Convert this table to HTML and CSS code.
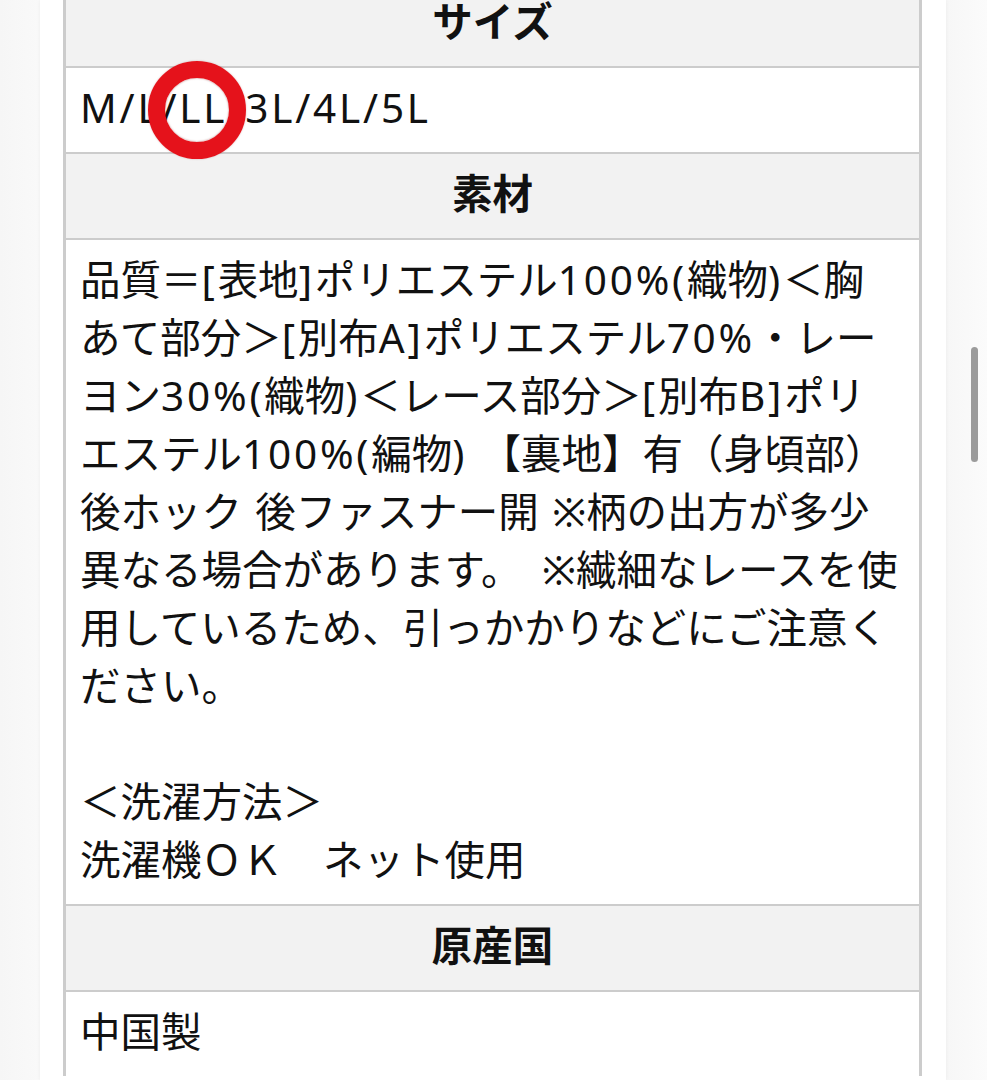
FILE: index.html
```html
<!DOCTYPE html>
<html lang="ja">
<head>
<meta charset="utf-8">
<title>商品仕様</title>
<link rel="stylesheet" href="styles.css">
</head>
<body>
<div class="page">
  <main class="panel">
    <section class="spec">
      <div class="row head">サイズ</div>
      <div class="row cell"><span class="lat">M/L/LL/3L/4L/5L</span></div>
      <div class="row head">素材</div>
      <div class="row cell">品質＝<span class="lat">[</span>表地<span class="lat">]</span>ポリエステル<span class="lat">100%(</span>織物<span class="lat">)</span>＜胸<br>あて部分＞<span class="lat">[</span>別布<span class="lat">A]</span>ポリエステル<span class="lat">70%</span>・レー<br>ヨン<span class="lat">30%(</span>織物<span class="lat">)</span>＜レース部分＞<span class="lat">[</span>別布<span class="lat">B]</span>ポリ<br>エステル<span class="lat">100%(</span>編物<span class="lat">) </span>【裏地】有（身頃部）<br>後ホック<span class="lat"> </span>後ファスナー開<span class="lat"> </span>※柄の出方が多少<br>異なる場合があります。<span class="lat wide"> </span>※繊細なレースを使<br>用しているため、引っかかりなどにご注意く<br>ださい。<br><br>＜洗濯方法＞<br>洗濯機ＯＫ　ネット使用</div>
      <div class="row head">原産国</div>
      <div class="row cell">中国製</div>
    </section>
  </main>
</div>
<div class="mark" aria-hidden="true"></div>
<div class="scroll-indicator" aria-hidden="true"></div>
</body>
</html>
```

FILE: styles.css
```css
html, body {
  margin: 0;
  padding: 0;
}
body {
  background: linear-gradient(to right, #f6f6f6 0, #f9f9f9 40px, #ffffff 40px, #ffffff 946px, #f7f7f7 946px, #fbfbfb 987px);
  font-family: "Noto Sans", "Noto Sans CJK JP", sans-serif;
  color: #111;
  height: 1080px;
  overflow: hidden;
}
.page {
  display: flex;
}
.panel {
  margin-left: 40px;
  width: 906px;
  height: 1080px;
  background: #fff;
  box-shadow: 0 0 4px rgba(0, 0, 0, 0.05);
  padding: 0 24px 0 23px;
  box-sizing: border-box;
}
.spec {
  margin-top: -20px;
  border-left: 3px solid #cccccc;
  border-right: 3px solid #cccccc;
}
.row {
  border-top: 2px solid #cccccc;
  font-size: 40.5px;
  line-height: 58px;
  padding: 11px 14px 15px;
  white-space: nowrap;
}
.head {
  background: #f2f2f2;
  text-align: center;
  font-weight: 700;
}
.cell {
  background: #fff;
}
.lat {
  letter-spacing: 2.8px;
}
.lat.wide {
  letter-spacing: 10px;
}
.mark {
  position: absolute;
  left: 148px;
  top: 61px;
  width: 98px;
  height: 98px;
  box-sizing: border-box;
  border-radius: 50%;
  border: 17px solid #e5121b;
  box-shadow: inset 0 0 2px rgba(120, 0, 0, 0.5), 0 0 2px rgba(120, 0, 0, 0.3);
}
.scroll-indicator {
  position: fixed;
  left: 971px;
  top: 347px;
  width: 7px;
  height: 115px;
  border-radius: 4px;
  background: #9b9b9b;
}
```
